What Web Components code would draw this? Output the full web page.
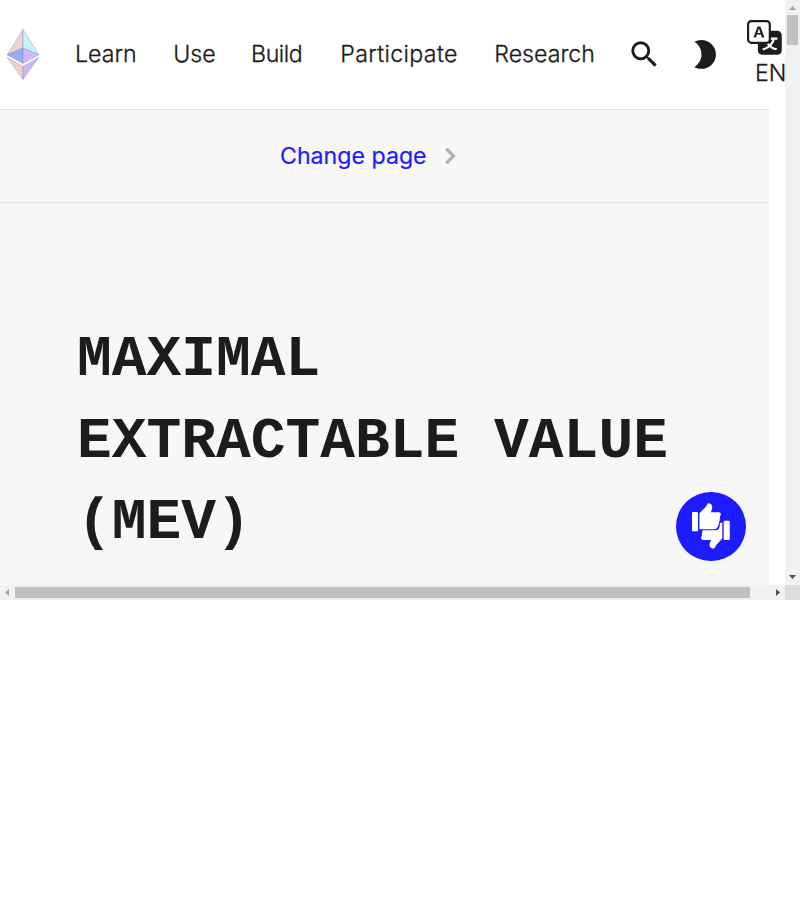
<!DOCTYPE html>
<html lang="en"><head><meta charset="utf-8"><title>Maximal extractable value (MEV)</title>
<style>body{margin:0;background:#fff;font-family:Inter,sans-serif;color:#1c1c1c}
nav-link:nth-child(3){letter-spacing:-.45px;margin-left:-1.2px}
nav-link:nth-child(4){letter-spacing:.34px;margin-left:1.5px}
</style></head>
<body>
<app-frame>
  <site-header slot="page">
    <nav-link>Learn</nav-link><nav-link>Use</nav-link><nav-link>Build</nav-link><nav-link>Participate</nav-link><nav-link>Research</nav-link>
  </site-header>
  <page-switch slot="page">Change page</page-switch>
  <page-title slot="page">Maximal extractable value (MEV)</page-title>
  <feedback-button slot="page"></feedback-button>
</app-frame>
<script>
const define = (name, html) => {
  const t = document.createElement('template');
  t.innerHTML = html;
  customElements.define(name, class extends HTMLElement {
    constructor() { super(); this.attachShadow({mode: 'open'}).append(t.content.cloneNode(true)); }
  });
};
define('scroll-bar', `<style>
:host{display:flex;flex-direction:column;background:#f1f1f1;box-sizing:border-box}
:host([horizontal]){flex-direction:row}
.thumb{background:#c1c1c1;margin:0 2px;height:30px}
.space{flex:1}
svg{display:block;width:15px;height:15px;flex:none}
.b{fill:#505050}.a{fill:#a3a3a3}
:host([horizontal]) .thumb{height:auto;width:735px;margin:2px 0}
:host([horizontal]) .v,:host(:not([horizontal])) .h{display:none}
</style>
<svg class="v a" viewBox="0 0 15 15"><path d="M4 10L7.5 6L11 10z"/></svg>
<svg class="h a" viewBox="0 0 15 15"><path d="M9 4L5 7.5L9 11z"/></svg>
<div class="thumb"></div><div class="space"></div>
<svg class="v b" viewBox="0 0 15 15"><path d="M4 5L7.5 9L11 5z"/></svg>
<svg class="h b" viewBox="0 0 15 15"><path d="M6 4L10 7.5L6 11z"/></svg>`);
define('app-frame', `<style>
:host{display:grid;grid-template:585px 15px / 785px 15px;width:800px;height:600px;position:relative}
.view{overflow:hidden;min-width:0;display:flex;flex-direction:column}
.corner{background:#dcdcdc}
</style><div class="view"><slot name="page"></slot></div><scroll-bar></scroll-bar><scroll-bar horizontal></scroll-bar><div class="corner"></div>`);
define('nav-link', `<style>:host{display:block;font-size:23.17px;line-height:37px;font-weight:300;-webkit-text-stroke:.3px currentColor;white-space:nowrap}</style><slot></slot>`);
define('eth-logo', `<style>:host{display:block;width:34px;height:52px}svg{display:block}</style>
<svg width="34" height="51" viewBox="0 0 34 52" preserveAspectRatio="none"><g stroke="#8c82df" stroke-opacity=".65" stroke-width=".7" stroke-linejoin="round">
<path fill="#f1d3cc" d="M17 .6V19.4L1.2 26.2z"/><path fill="#befbf4" d="M17 .6V19.4L32.8 26.2z"/>
<path fill="#91aff0" d="M17 19.4V35.2L1.2 26.2z"/><path fill="#cfbaf5" d="M17 19.4V35.2L32.8 26.2z"/>
<path fill="#f1d0ca" d="M1.2 29L17 38.2V51.2z"/><path fill="#cdb9f6" d="M32.8 29L17 38.2V51.2z"/></g></svg>`);
define('site-header', `<style>
:host{display:flex;align-items:center;box-sizing:border-box;width:769px;height:110px;border-bottom:1px solid #e1e1e1;padding-left:6px;flex:none}
nav{display:flex;gap:36.6px;margin-left:35px;width:520px;flex:none}
svg{display:block;flex:none;fill:#1c1c1c}
.icons{display:flex;gap:26px;margin-left:31.5px;flex:none}
.lang{display:flex;flex-direction:column;margin-left:25px;font-size:23.17px;line-height:37px;font-weight:300;-webkit-text-stroke:.3px currentColor;width:40px;flex:none;padding-top:3px}
.lang span{padding-left:8px}
</style><eth-logo></eth-logo><nav><slot></slot></nav>
<div class="icons">
<svg width="34.75" height="34.75" viewBox="0 0 24 24"><path d="M15.5 14h-.79l-.28-.27A6.471 6.471 0 0016 9.5 6.5 6.5 0 109.5 16c1.61 0 3.09-.59 4.23-1.57l.27.28v.79l5 4.99L20.49 19l-4.99-5zm-6 0C7.01 14 5 11.99 5 9.5S7.01 5 9.5 5 14 7.01 14 9.5 11.99 14 9.5 14z"/></svg>
<svg width="34.75" height="34.75" viewBox="0 0 24 24"><path d="M10 2c-1.82 0-3.53.5-5 1.35C7.99 5.08 10 8.3 10 12s-2.01 6.92-5 8.65C6.47 21.5 8.18 22 10 22c5.52 0 10-4.48 10-10S15.52 2 10 2z"/></svg>
</div>
<div class="lang"><svg width="34.75" height="34.75" viewBox="0 0 16 16"><path d="M4.545 6.714 4.11 8H3l1.862-5h1.284L8 8H6.833l-.435-1.286H4.545zm1.634-.736L5.5 3.956h-.049l-.679 2.022H6.18z"/><path d="M0 2a2 2 0 0 1 2-2h7a2 2 0 0 1 2 2v3h3a2 2 0 0 1 2 2v7a2 2 0 0 1-2 2H7a2 2 0 0 1-2-2v-3H2a2 2 0 0 1-2-2V2zm2-1a1 1 0 0 0-1 1v7a1 1 0 0 0 1 1h7a1 1 0 0 0 1-1V2a1 1 0 0 0-1-1H2zm7.138 9.995c.193.301.402.583.63.846-.748.575-1.673 1.001-2.768 1.292.178.217.451.635.555.867 1.125-.359 2.08-.844 2.886-1.494.777.665 1.739 1.165 2.93 1.472.133-.254.414-.673.629-.89-1.125-.253-2.057-.694-2.82-1.284.681-.747 1.222-1.651 1.621-2.757H14V8h-3v1.047h.765c-.318.844-.74 1.546-1.272 2.13a6.066 6.066 0 0 1-.415-.492 1.988 1.988 0 0 1-.94.31z"/></svg><span>EN</span></div>`);
define('page-switch', `<style>
:host{display:flex;align-items:center;box-sizing:border-box;width:769px;height:93px;flex:none;background:#f7f7f7;border-bottom:1px solid #e1e1e1;padding-left:280px;color:#1c1cff;font-size:23.17px;line-height:37px;font-weight:400;-webkit-text-stroke:.2px currentColor}
span{width:164px}
svg{display:block}
</style><span><slot></slot></span><svg width="14" height="20" viewBox="0 0 14 20" fill="none" stroke="#b2b2b2" stroke-width="3.4"><path d="M2.3 2.7L9.5 9.9L2.3 17.1"/></svg>`);
define('page-title', `<style>
:host{display:block;box-sizing:border-box;width:769px;flex:1;background:#f7f7f7;padding:116px 70px 0 77px}
h1{margin:0;font:bold 57.93px/81.5px "Liberation Mono",monospace;text-transform:uppercase}
</style><h1><slot></slot></h1>`);
define('feedback-button', `<style>
:host{position:absolute;left:676px;top:491.6px;width:69.5px;height:69.5px;border-radius:50%;background:#1c1cff}
svg{display:block}
</style><svg width="69.5" height="69.5" viewBox="676 491.6 69.5 69.5" fill="#fff">
<rect x="692" y="511.5" width="6" height="19.3" rx="1"/>
<path d="M699.4 528.8V513.7Q699.4 512.9 700.1 512.2L705.4 506.8Q706.6 505.4 707.1 504Q707.7 502.6 709.6 503Q712.7 503.7 712.2 507.2Q712 509.4 710.8 511.8H718.8Q721 512 720.8 514Q720.8 515.3 719.9 515.8Q720.5 517 719.6 518.7Q720.2 520.2 719 521.5Q719.4 523 718.4 524.3Q718.6 527.3 715.5 528.8z"/>
<rect x="723.7" y="520.3" width="6.1" height="19.3" rx="1"/>
<path d="M722.3 522.2V537.5Q722.3 538.2 721.6 538.9L716.2 544.5Q715.4 546 715 547.1Q714.2 548.7 712.2 548Q709 547.2 709.6 543.7Q710 541.5 711.1 539.5H703Q700.9 539.4 700.9 537.4Q701.1 536 702 535.5Q701.2 534 702.3 532.7Q701.7 531 702.9 529.9H715.8Q719.3 529.5 719.7 525.5L720.1 522.5z"/>
</svg>`);
</script></body></html>
